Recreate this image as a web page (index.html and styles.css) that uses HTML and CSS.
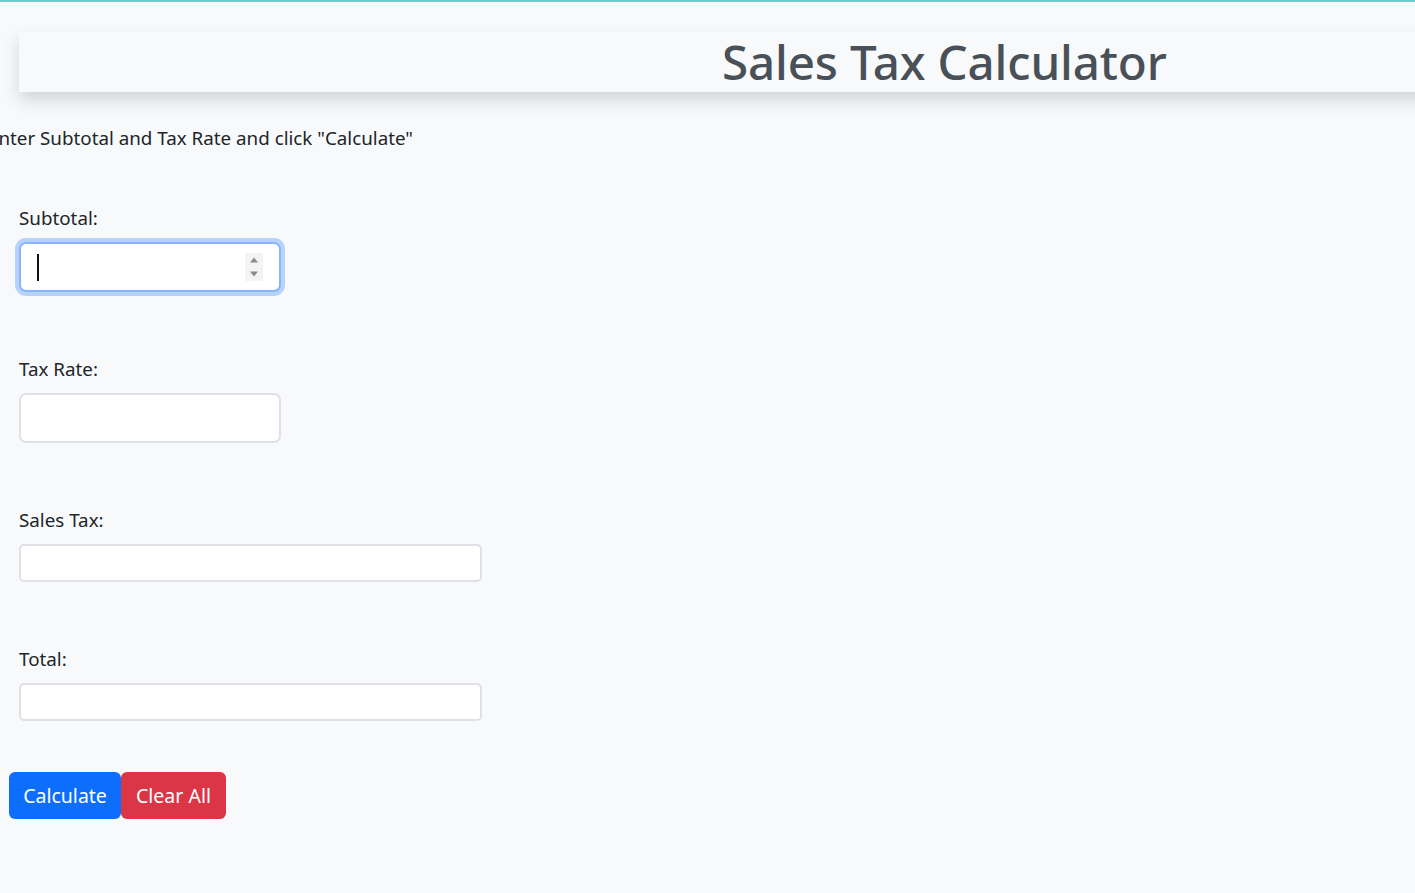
FILE: index.html
```html
<!DOCTYPE html>
<html lang="en">
<head>
<meta charset="utf-8">
<title>Sales Tax Calculator</title>
<link rel="stylesheet" href="styles.css">
</head>
<body>
<div class="topline"></div>
<main class="page">
  <header class="banner">
    <h1 class="title">Sales Tax Calculator</h1>
  </header>
  <p class="intro">Enter Subtotal and Tax Rate and click "Calculate"</p>
  <form class="calc">
    <div class="group">
      <label class="label" for="subtotal">Subtotal:</label>
      <div class="field field-focus">
        <span class="caret"></span>
        <input id="subtotal" class="bare" type="text">
        <span class="spin">
          <svg width="18" height="28" viewBox="0 0 18 28"><path d="M5 9.5 L9 4.5 L13 9.5 Z" fill="#8a8a8a"/><path d="M5 18.5 L13 18.5 L9 23.5 Z" fill="#8a8a8a"/></svg>
        </span>
      </div>
    </div>
    <div class="group">
      <label class="label" for="rate">Tax Rate:</label>
      <input id="rate" class="field" type="text">
    </div>
    <div class="group">
      <label class="label" for="tax">Sales Tax:</label>
      <input id="tax" class="field field-wide" type="text">
    </div>
    <div class="group">
      <label class="label" for="total">Total:</label>
      <input id="total" class="field field-wide" type="text">
    </div>
    <div class="buttons">
      <button type="button" class="btn btn-blue">Calculate</button>
      <button type="button" class="btn btn-red">Clear All</button>
    </div>
  </form>
</main>
</body>
</html>
```

FILE: styles.css
```css
* { box-sizing: border-box; }
html, body {
  margin: 0;
  padding: 0;
  background: #f8f9fa;
  overflow: hidden;
}
body {
  font-family: "Noto Sans", "Open Sans", sans-serif;
  color: #212529;
  height: 893px;
}
.topline {
  height: 2px;
  background: #62cfd0;
}
.page {
  padding: 30px 0 0 19px;
}
.banner {
  margin-right: -40px;
  height: 60px;
  background: #f8f9fa;
  box-shadow: 0 8px 16px rgba(0,0,0,0.15);
  padding-left: 703px;
  display: flex;
  align-items: center;
}
.title {
  margin: 0;
  font-size: 47.5px;
  font-weight: 500;
  color: #495057;
  letter-spacing: -0.15px;
  line-height: 60px;
}
.intro {
  margin: 33px 0 0 -31px;
  font-size: 18.8px;
  line-height: 27px;
  white-space: nowrap;
}
.calc {
  margin-top: 53px;
  display: flex;
  flex-direction: column;
  gap: 64px;
}
.group {
  display: flex;
  flex-direction: column;
  align-items: flex-start;
}
.label {
  font-size: 18.8px;
  line-height: 27px;
  margin-bottom: 10px;
}
.field {
  width: 262px;
  height: 50px;
  border: 2px solid #dfe1e6;
  border-radius: 7px;
  background: #fff;
  font: inherit;
  padding: 0 12px;
  outline: none;
}
.field-wide {
  width: 463px;
  height: 38px;
  border-radius: 5px;
}
.field-focus {
  display: flex;
  align-items: center;
  border-color: #86b7fe;
  box-shadow: 0 0 0 4px #b7d3fc;
  padding: 0 16px 0 16px;
}
.caret {
  width: 1.5px;
  height: 27px;
  background: #111;
  flex: none;
}
.bare {
  flex: 1;
  min-width: 0;
  border: 0;
  outline: none;
  background: transparent;
  font: inherit;
  height: 100%;
}
.spin {
  flex: none;
  width: 18px;
  height: 28px;
  background: #f4f4f4;
  display: flex;
}
.buttons {
  display: flex;
  margin-left: -10px;
  margin-top: -13px;
}
.btn {
  font-family: inherit;
  font-size: 19.5px;
  color: #fff;
  border: 0;
  height: 47px;
  border-radius: 6px;
  padding: 0;
  white-space: nowrap;
  cursor: pointer;
}
.btn-blue { background: #0d6efd; width: 112px; }
.btn-red { background: #dc3545; width: 105px; }
```
